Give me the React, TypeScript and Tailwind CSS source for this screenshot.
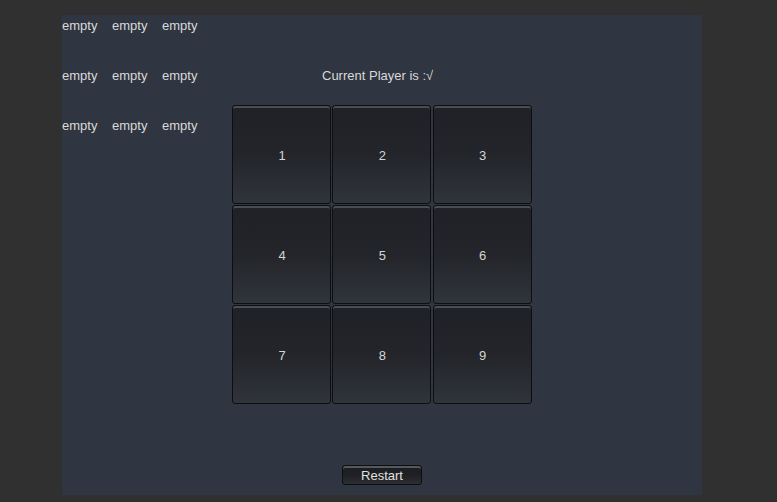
import React from "react";

const font = { fontFamily: '"Liberation Sans", Arial, sans-serif' };

function Cell({ n }: { n: number }) {
  return (
    <button
      className="w-[99px] h-[99px] rounded-[3px] border border-[#0d0e10] bg-gradient-to-b from-[#1f2126] via-[#23252a] to-[#30343b] text-[13px] text-[#d4d4d4] flex items-center justify-center pt-[2px] pl-[1px] shadow-[inset_0_2px_0_#4a4d53]"
    >
      {n}
    </button>
  );
}

export default function App() {
  const rows = [0, 1, 2];
  return (
    <div className="w-[777px] h-[502px] bg-[#2f302f] pt-[15px] pl-[62px]" style={font}>
      <div className="w-[640px] h-[480px] bg-[#2f3541] flex text-[13px] text-[#d9d9d9]">
        <div className="w-[170px] flex flex-col pt-[1px]">
          {rows.map((r) => (
            <div key={r} className="h-[50px] flex">
              {[0, 1, 2].map((c) => (
                <div key={c} className="w-[50px] leading-[20px]">
                  empty
                </div>
              ))}
            </div>
          ))}
        </div>
        <div className="w-[300px] flex flex-col">
          <div className="h-[90px] pt-[51px] pl-[90px] leading-[20px]">Current Player is :√</div>
          <div className="grid grid-cols-3 gap-x-[1px] gap-y-[1px] w-[300px]">
            {[1, 2, 3, 4, 5, 6, 7, 8, 9].map((n) => (
              <Cell key={n} n={n} />
            ))}
          </div>
          <div className="mt-[61px] pl-[110px]">
            <button className="w-[80px] h-[20px] rounded-[3px] border border-[#0d0e10] bg-gradient-to-b from-[#1c1d20] via-[#1e2023] to-[#2c2e33] shadow-[inset_0_2px_0_#55585c] text-[13px] text-[#e0e0e0] leading-[18px] pt-[1px]">
              Restart
            </button>
          </div>
        </div>
      </div>
    </div>
  );
}
